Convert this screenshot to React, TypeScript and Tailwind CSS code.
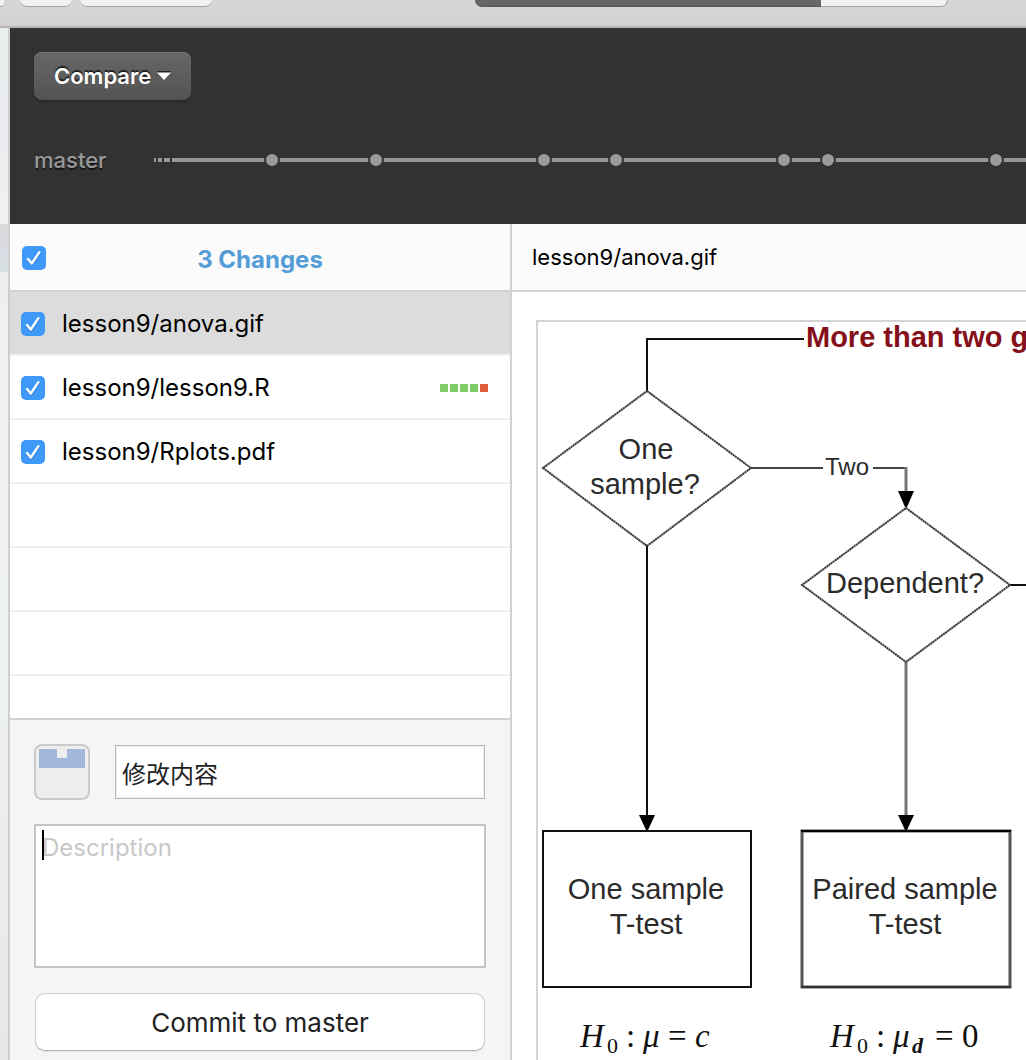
import React from "react";

const files = [
  { name: "lesson9/anova.gif", selected: true, diff: [] as string[] },
  { name: "lesson9/lesson9.R", selected: false, diff: ["add", "add", "add", "add", "del"] },
  { name: "lesson9/Rplots.pdf", selected: false, diff: [] as string[] },
];

const commits = [118, 222, 390, 462, 630, 674, 842];

function Check({ id, label }: { id: string; label: string }) {
  return (
    <span className="relative block size-6 shrink-0">
      <input
        id={id}
        type="checkbox"
        defaultChecked
        aria-label={label}
        className="peer block size-6 appearance-none rounded-[5px] bg-white ring-1 ring-inset ring-gray-300 checked:bg-[#3f99f8] checked:ring-0"
      />
      <svg
        viewBox="0 0 24 24"
        className="pointer-events-none absolute inset-0 hidden size-6 peer-checked:block"
        fill="none"
        strokeWidth="2.4"
        strokeLinecap="round"
        strokeLinejoin="round"
      >
        <path d="M6.2 14.2 L10 18.8 L17.6 7.5" stroke="#2f7fd8" />
        <path d="M6 12.9 L9.8 17.5 L17.4 6.2" stroke="#ffffff" />
      </svg>
    </span>
  );
}

function Toolbar() {
  return (
    <div className="flex h-7 shrink-0 items-start border-b-2 border-[#b7b5b7] bg-linear-to-b from-[#d8d6d9] to-[#d1cfd2]">
      <button aria-label="Sidebar" className="mr-4 h-[7px] w-1 rounded-br-lg border-b border-[#a5a3a6] bg-[#f2f2f2]" />
      <button aria-label="Add" className="mr-2 h-[7px] w-[52px] rounded-b-lg border-b border-[#a5a3a6] bg-[#f2f2f2]" />
      <button aria-label="Branch" className="h-[7px] w-[132px] rounded-b-lg border-b border-[#a5a3a6] bg-[#f2f2f2]" />
      <div className="ml-[263px] flex">
        <button aria-label="Changes" className="h-[7px] w-[346px] rounded-bl-lg border-b border-[#575657] bg-[#666666]" />
        <button aria-label="History" className="h-[7px] w-[127px] rounded-br-lg border-b border-r border-[#a5a3a6] bg-[#f2f2f2]" />
      </div>
    </div>
  );
}

function CommitGraph() {
  return (
    <svg className="h-4 min-w-0 flex-1" role="img" aria-label="Commit history">
      <g fill="#92979a">
        <rect x="0" y="6" width="2" height="4" />
        <rect x="4" y="6" width="4" height="4" />
        <rect x="10" y="6" width="6" height="4" />
        <rect x="18" y="6" width="2000" height="4" />
      </g>
      {commits.map((x) => (
        <circle key={x} cx={x} cy="8" r="7" fill="#999999" stroke="#323232" strokeWidth="2" />
      ))}
    </svg>
  );
}

function BranchHeader() {
  return (
    <header className="flex h-[196px] shrink-0 flex-col items-start bg-[#323232] py-6 pl-6">
      <button className="flex h-12 items-center gap-1.5 rounded-lg bg-linear-to-b from-[#676767] to-[#535353] px-5 text-[22px] font-semibold text-white shadow-[0_2px_1px_#282828,inset_0_1px_0_#747474] [text-shadow:0_-2px_0_#222]">
        Compare
        <svg width="14" height="10" viewBox="0 0 14 10">
          <path d="M0 0H14L13 2H1Z" fill="#222222" />
          <path d="M0 1.5H14L7 9Z" fill="#ffffff" />
        </svg>
      </button>
      <div className="mt-11 flex w-full items-center">
        <span className="w-[120px] text-[22px] leading-8 font-medium text-[#999999] [text-shadow:0_2px_0_#161616]">master</span>
        <CommitGraph />
      </div>
    </header>
  );
}

function FileList() {
  return (
    <ul className="min-h-0 flex-1 overflow-hidden bg-white">
      {files.map((f, i) => (
        <li
          key={f.name}
          className={
            f.selected
              ? "flex h-16 items-center border-b-2 border-[#f0f0f0] bg-[#dcdcdc] pt-0.5 pr-[22px] pl-[11px]"
              : "flex h-16 items-center border-b-2 border-[#f0f0f0] pt-0.5 pr-[22px] pl-[11px]"
          }
        >
          <Check id={`file-${i}`} label={`Include ${f.name}`} />
          <label htmlFor={`file-${i}`} className="ml-[17px] flex-1 text-2xl text-black">
            {f.name}
          </label>
          <span className="flex gap-0.5">
            {f.diff.map((d, k) => (
              <span key={k} className={d === "add" ? "size-2 bg-[#80cc66]" : "size-2 bg-[#df5c38]"} />
            ))}
          </span>
        </li>
      ))}
      {[0, 1, 2, 3].map((n) => (
        <li key={n} className="h-16 border-b-2 border-[#f0f0f0]" />
      ))}
    </ul>
  );
}

function CommitForm() {
  return (
    <form className="flex shrink-0 flex-col border-t-2 border-[#d2d2d2] bg-[#f5f5f5] px-6 pt-6 pb-[9px]" onSubmit={(e) => e.preventDefault()}>
      <div className="flex items-center gap-[25px]">
        <div className="size-14 shrink-0 rounded-lg border-2 border-[#cacaca] bg-[#eeeeee]">
          <svg viewBox="0 0 52 52" className="size-full" role="img" aria-label="Avatar">
            <path d="M3 3H21V12H31V3H49V22H3Z" fill="#a3b7dc" />
          </svg>
        </div>
        <input
          aria-label="Summary"
          defaultValue="修改内容"
          className="mr-px h-[54px] min-w-0 flex-1 border border-[#b8b8b8] bg-white px-1.5 text-2xl text-[#222222] inset-shadow-[0_0_0_1px_#f0f0f0] outline-none"
        />
      </div>
      <div className="relative mt-6">
        <textarea
          aria-label="Description"
          placeholder="Description"
          className="block h-36 w-full resize-none border-2 border-[#c4c4c4] bg-white px-1.5 py-1.5 text-2xl outline-none placeholder:text-[#c8c8c8]"
        />
        <span className="absolute top-1.5 left-2 h-[30px] w-0.5 bg-black" />
      </div>
      <button className="mx-px mt-[25px] h-[58px] rounded-[10px] border border-[#cdcdcd] border-b-[#b2b2b2] bg-white text-[26px] text-[#222222] shadow-[0_1px_1px_#e4e4e4]">
        Commit to master
      </button>
    </form>
  );
}

function Flowchart() {
  return (
    <svg className="block size-full" role="img" aria-label="Test selection flowchart">
      <g transform="translate(-538 -322)" fontFamily="'Liberation Sans', sans-serif">
        <g fill="none" stroke="#111111" strokeWidth="2">
          <path d="M647 392V339H804" />
          <path d="M751 468H823M873 468H906" stroke="#444444" />
          <path d="M906 467V492" stroke="#777777" strokeWidth="3" />
          <path d="M647 546V815" />
          <path d="M906 662V815" stroke="#777777" strokeWidth="3" />
          <path d="M1010 585H1200" />
          <g stroke="#3a3a3a" strokeWidth="2" strokeDasharray="2.2 0.4">
            <path d="M647 391L751 468L647 546L543 468Z" />
            <path d="M906 508L1010 585L906 662L802 585Z" />
          </g>
          <path d="M543 831H751V987H543Z" />
          <path d="M802 831H1010V987H802Z" stroke="#555555" strokeWidth="3" />
          <path d="M801 831H1011" stroke="#000000" />
          <path d="M801 987H1011" stroke="#333333" />
        </g>
        <g fill="#000000">
          <path d="M639 815H655L648 830H646Z" />
          <path d="M898 815H914L907 830H905Z" />
          <path d="M898 491H914L907 507H905Z" />
        </g>
        <text x="806" y="347" fontSize="29" fontWeight="700" fill="#85101a">More than two g</text>
        <g fill="#2b2b2b" fontSize="29" textAnchor="middle">
          <text x="646" y="459">One</text>
          <text x="645" y="494">sample?</text>
          <text x="847" y="475" fontSize="24">Two</text>
          <text x="905" y="593">Dependent?</text>
          <text x="646" y="899">One sample</text>
          <text x="646" y="934">T-test</text>
          <text x="905" y="899">Paired sample</text>
          <text x="905" y="934">T-test</text>
        </g>
        <g fill="#111111" fontSize="33" fontFamily="'Liberation Serif', serif">
          <text x="580" y="1047" fontStyle="italic">H</text>
          <text x="607" y="1053" fontSize="22">0</text>
          <text x="626" y="1047">:</text>
          <text x="643" y="1047" fontStyle="italic">μ</text>
          <text x="668" y="1047">=</text>
          <text x="695" y="1047" fontStyle="italic">c</text>
          <text x="830" y="1047" fontStyle="italic">H</text>
          <text x="857" y="1053" fontSize="22">0</text>
          <text x="876" y="1047">:</text>
          <text x="893" y="1047" fontStyle="italic">μ</text>
          <text x="912" y="1053" fontSize="22" fontWeight="700" fontStyle="italic">d</text>
          <text x="935" y="1047">=</text>
          <text x="962" y="1047">0</text>
        </g>
      </g>
    </svg>
  );
}

export default function App() {
  return (
    <div className="flex h-screen flex-col overflow-hidden bg-white font-['Inter','Noto_Sans_CJK_SC',sans-serif]">
      <Toolbar />
      <div className="flex min-h-0 flex-1">
        <div className="flex w-2 shrink-0 flex-col">
          <div className="h-[196px] bg-linear-to-b from-[#e8efed] via-[#ebebef] to-[#f0f1f1]" />
          <div className="h-12 bg-linear-to-b from-[#dadada] via-[#dadae4] to-[#d5e2e0]" />
          <div className="flex-1 bg-linear-to-b from-[#efefef] via-[#eef1f2] to-[#e8e7e6]" />
        </div>
        <div className="flex min-w-0 flex-1 flex-col border-l-2 border-[#cecece]">
          <BranchHeader />
          <div className="flex min-h-0 flex-1">
            <aside className="flex w-[502px] shrink-0 flex-col border-r-2 border-[#d2d2d2]">
              <div className="grid h-[68px] shrink-0 grid-cols-[24px_1fr_24px] items-center border-b-2 border-[#d2d2d2] bg-[#fbfbfb] px-3 pt-0.5">
                <Check id="all" label="Include all changes" />
                <h2 className="pt-1 text-center text-2xl font-bold text-[#559dd7]">3 Changes</h2>
              </div>
              <FileList />
              <CommitForm />
            </aside>
            <main className="flex min-w-0 flex-1 flex-col">
              <h1 className="flex h-[68px] shrink-0 items-center border-b-2 border-[#d2d2d2] bg-[#fbfbfb] px-5 text-[22px] text-black">
                lesson9/anova.gif
              </h1>
              <div className="min-h-0 flex-1 overflow-hidden bg-white pt-7 pl-6">
                <div className="h-full border-t-2 border-l-2 border-[#d4d4d4]">
                  <Flowchart />
                </div>
              </div>
            </main>
          </div>
        </div>
      </div>
    </div>
  );
}
